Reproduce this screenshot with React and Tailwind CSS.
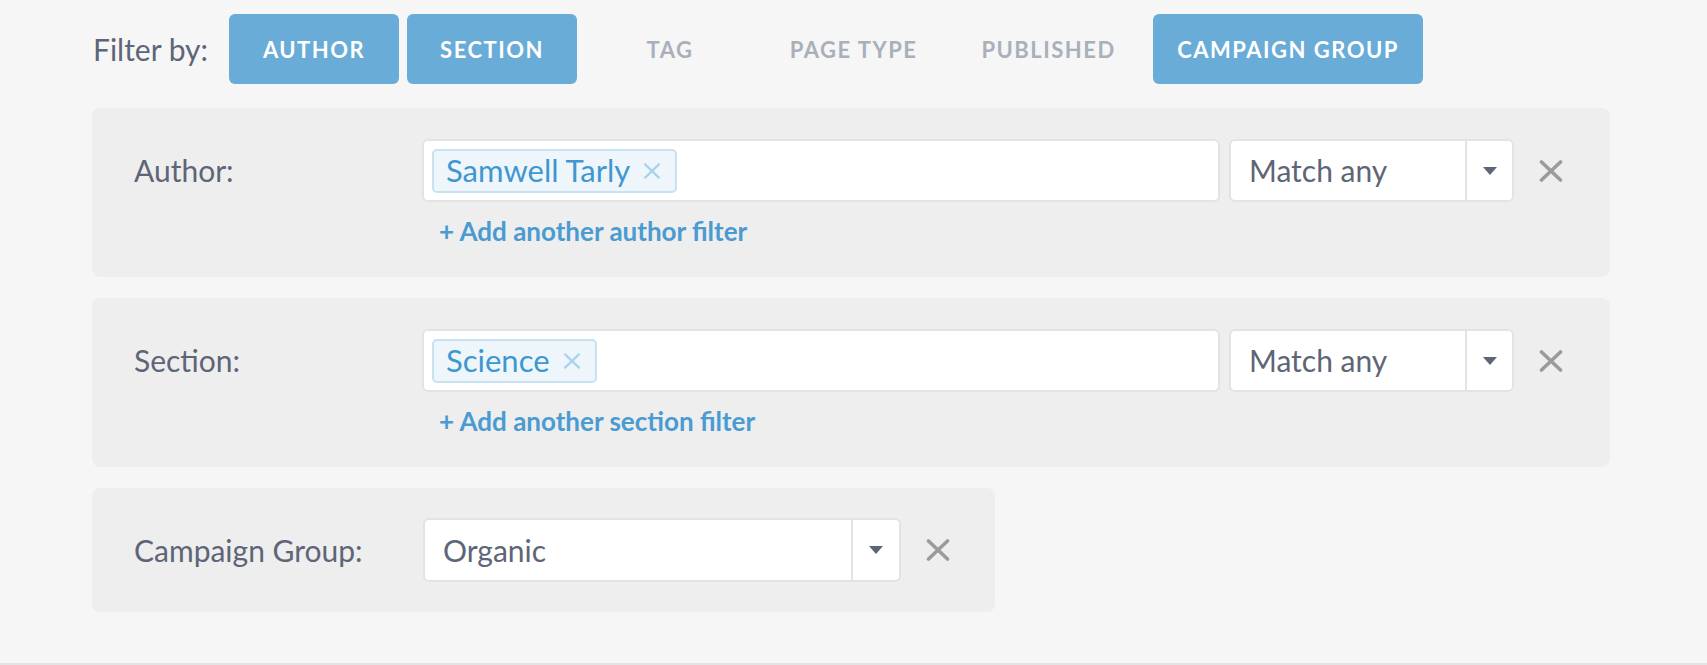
import React from 'react';

const FONT = { fontFamily: 'Lato, "Open Sans", sans-serif' };

/* ─── Filter tabs ─────────────────────────────────────────────── */
const tabs = [
  { label: 'Author', active: true, w: 'w-[170px]' },
  { label: 'Section', active: true, w: 'w-[170px]' },
  { label: 'Tag', active: false, w: 'w-[170px]' },
  { label: 'Page Type', active: false, w: 'w-[181px]' },
  { label: 'Published', active: false, w: 'w-[193px]' },
  { label: 'Campaign Group', active: true, w: 'w-[270px]' },
];

const CloseIcon = ({ className, width = 3.6 }) => (
  <svg viewBox="0 0 24 22" className={className} fill="none">
    <path d="M2.5 2 21.5 20M21.5 2 2.5 20" stroke="currentColor" strokeWidth={width} strokeLinecap="round" />
  </svg>
);

const Caret = () => (
  <svg viewBox="0 0 14 8" className="w-[14px] h-[8px] text-[#5d6577]">
    <path d="M0 0h14L7 8z" fill="currentColor" />
  </svg>
);

const Chip = ({ children }) => (
  <span className="inline-flex items-center h-[44px] pl-[12px] pr-[14px] gap-[13px] rounded-[5px] bg-[#eef6fc] border-2 border-[#c9e2f2] text-[#3f97cf] text-[31px]">
    {children}
    <CloseIcon className="w-[18px] h-[16px] text-[#a9d3ed]" width={3.2} />
  </span>
);

const Select = ({ value, className, arrow = 'w-[47px]' }) => (
  <div className={`flex h-[63px] bg-white border-2 border-[#e3e3e3] rounded-[6px] ${className}`}>
    <div className="flex-1 flex items-center pl-[18px] text-[30px] text-[#5d6577]">{value}</div>
    <div className={`${arrow} border-l-2 border-[#e3e3e3] flex items-center justify-center`}>
      <Caret />
    </div>
  </div>
);

const MultiFilter = ({ label, chip, kind }) => (
  <div className="bg-[#eeeeee] rounded-[8px] w-[1518px] pl-[42px] pt-[31px] pb-[27px]">
    <div className="flex items-center">
      <div className="w-[288px] text-[30px] text-[#5d6577]">{label}</div>
      <div className="w-[798px] h-[63px] bg-white border-2 border-[#e3e3e3] rounded-[6px] flex items-center pl-[8px]">
        <Chip>{chip}</Chip>
      </div>
      <Select value="Match any" className="w-[285px] ml-[9px]" />
      <CloseIcon className="w-[24px] h-[22px] ml-[25px] text-[#9b9b9b]" />
    </div>
    <div className="ml-[305px] mt-[10px] h-[38px] flex items-center text-[26px] font-bold text-[#4a9bd1]">
      + Add another {kind} filter
    </div>
  </div>
);

export default function App() {
  return (
    <div className="min-h-[665px] bg-[#f6f6f6] border-b-2 border-[#e4e4e4] pl-[92px]" style={FONT}>
      <div className="flex items-center pt-[14px]">
        <span className="text-[30px] text-[#5d6577] mr-[21px] pl-[1px]">Filter by:</span>
        <div className="flex gap-[8px]">
          {tabs.map((t) => (
            <button
              key={t.label}
              className={`${t.w} h-[70px] rounded-[6px] uppercase text-[22px] font-bold tracking-[1.5px] ${
                t.active ? 'bg-[#68acd7] text-white' : 'text-[#a9b0ba]'
              }`}
            >
              {t.label}
            </button>
          ))}
        </div>
      </div>

      <div className="mt-[24px] flex flex-col gap-[21px] items-start">
        <MultiFilter label="Author:" chip="Samwell Tarly" kind="author" />
        <MultiFilter label="Section:" chip="Science" kind="section" />

        <div className="bg-[#eeeeee] rounded-[8px] w-[903px] pl-[42px] py-[30px] flex items-center">
          <div className="w-[289px] text-[30px] text-[#5d6577]">Campaign Group:</div>
          <Select value="Organic" className="w-[478px] h-[64px]" arrow="w-[48px]" />
          <CloseIcon className="w-[24px] h-[22px] ml-[25px] text-[#9b9b9b]" />
        </div>
      </div>
    </div>
  );
}
